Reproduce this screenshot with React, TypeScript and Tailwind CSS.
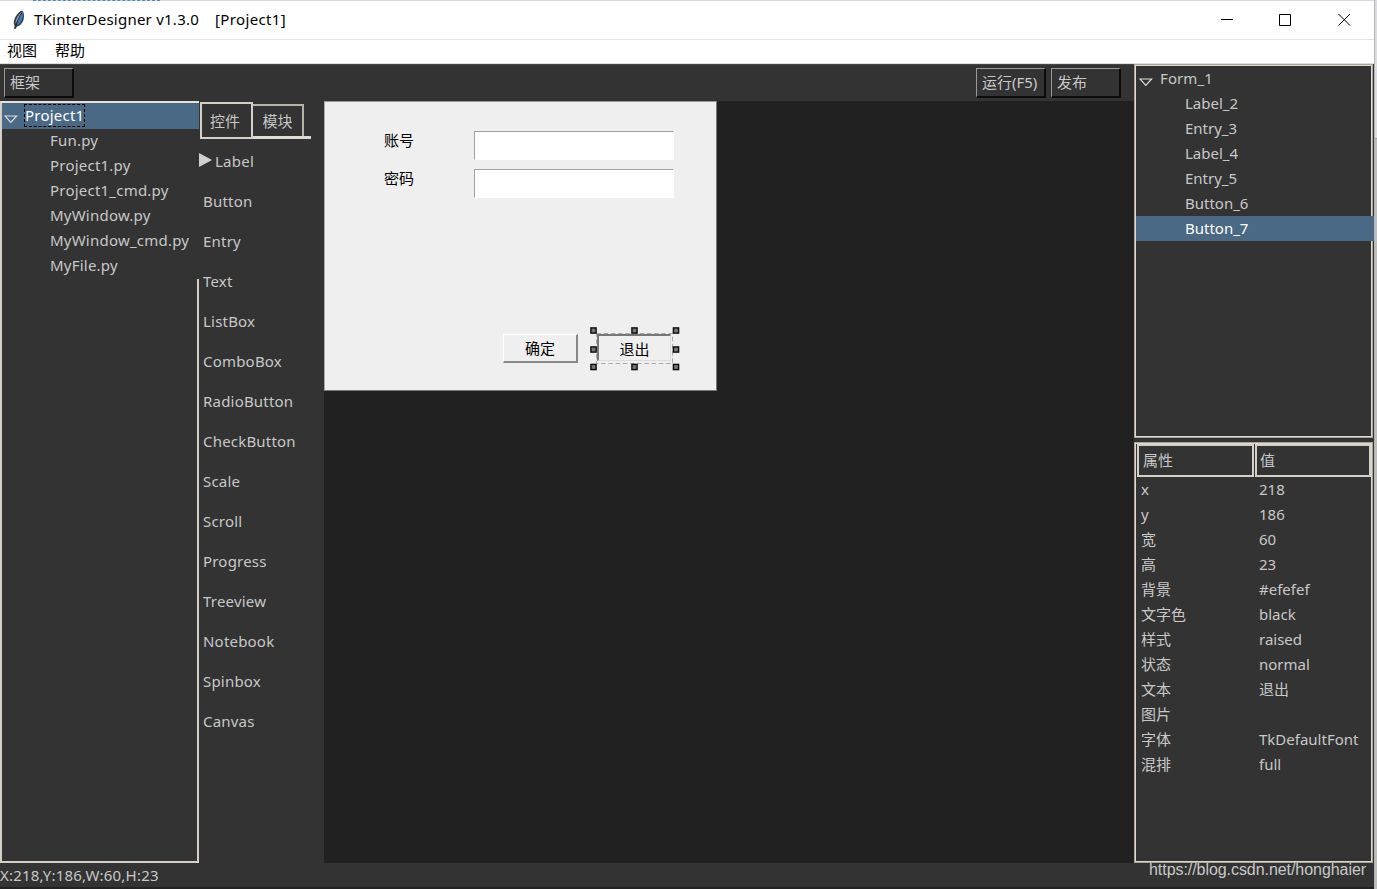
import React from "react";

const files = ["Fun.py", "Project1.py", "Project1_cmd.py", "MyWindow.py", "MyWindow_cmd.py", "MyFile.py"];
const widgets = ["Button", "Entry", "Text", "ListBox", "ComboBox", "RadioButton", "CheckButton", "Scale", "Scroll", "Progress", "Treeview", "Notebook", "Spinbox", "Canvas"];
const nodes = ["Label_2", "Entry_3", "Label_4", "Entry_5", "Button_6", "Button_7"];
const props: [string, string][] = [
  ["x", "218"], ["y", "186"], ["宽", "60"], ["高", "23"], ["背景", "#efefef"], ["文字色", "black"],
  ["样式", "raised"], ["状态", "normal"], ["文本", "退出"], ["图片", ""], ["字体", "TkDefaultFont"], ["混排", "full"],
];
const handles = [
  [3.5, 3.5], [44.5, 3.5], [86, 3.5], [3.5, 22.5], [86, 22.5], [3.5, 40], [44.5, 40], [86, 40],
];

function Feather() {
  return (
    <svg width="12" height="20" viewBox="0 0 12 20" className="ml-[13px] shrink-0">
      <path d="M9 0.5 C11 2 11.5 6 10.5 10 C9.5 13 7 16 4 16.5 L2.6 19 L1 18.6 L1.6 15.5 C0 13 1 9.5 3 6 C4.5 3.5 7 1 9 0.5 Z" fill="#363c42" />
      <path d="M9.2 1.5 C10.5 4 10 9 7.4 13 L4 15.2 C4.6 10 6 6 9.2 1.5 Z" fill="#3f79b5" />
      <path d="M8.3 2.4 C4.6 5.6 2.3 10 2.5 14 L4.6 10.4 Z" fill="#93a9b8" />
      <path d="M8.8 3 C6.2 7 4.2 11 2.4 16.6" fill="none" stroke="#1b242c" strokeWidth="0.8" />
    </svg>
  );
}

function Expander({ className }: { className: string }) {
  return (
    <svg width="14" height="9" viewBox="0 0 14 9" className={className} fill="none" stroke="#dedede" strokeWidth="1.2">
      <path d="M1 1 H12.6 L6.8 7.4 Z" />
    </svg>
  );
}

function ToolButton({ label }: { label: string }) {
  return (
    <div className="flex h-[30px] w-[70px] items-center border-t border-r-2 border-b-2 border-l border-t-[#999] border-r-[#0c0c0c] border-b-[#0c0c0c] border-l-[#999] pl-[5px] whitespace-nowrap">
      {label}
    </div>
  );
}

function Selection() {
  return (
    <svg width="90" height="44" viewBox="0 0 90 44" className="absolute top-[327px] left-[590px]">
      <rect x="6.5" y="6.5" width="76" height="30" fill="none" stroke="#aaa" strokeDasharray="4.5 2.7" />
      {handles.map(([x, y]) => (
        <rect key={`${x}-${y}`} x={x - 2.6} y={y - 2.6} width="5.2" height="5.2" fill="#777" stroke="#0a0a0a" strokeWidth="1.4" />
      ))}
    </svg>
  );
}

export default function App() {
  return (
    <div className="relative flex h-[889px] w-[1377px] overflow-hidden bg-[#333] font-['Noto_Sans','Noto_Sans_CJK_SC',sans-serif] text-[15px] leading-[25px] text-[#c8c8c8]">
      <div className="flex w-[1374px] flex-col">
        <header className="flex h-[40px] items-center border-t border-b border-t-[#d8d8e0] border-b-[#e3e3e3] bg-white text-black">
          <Feather />
          <span className="mb-[2px] ml-[9px] tracking-[0.24px] whitespace-pre">TKinterDesigner v1.3.0</span>
          <span className="mb-[2px] ml-[16px] tracking-[0.36px]">[Project1]</span>
          <svg width="134" height="14" viewBox="0 0 134 14" className="mr-[22px] ml-auto" fill="none" stroke="black" strokeWidth="1">
            <path d="M3 6.5 H15 M61.5 1.5 H72.5 V12.5 H61.5 Z M120.5 1 L132 12.5 M132 1 L120.5 12.5" />
          </svg>
        </header>
        <nav className="flex h-[24px] items-center gap-[18px] border-b border-[#ddd] bg-white pb-[2px] pl-[7px] text-black">
          <span>视图</span>
          <span>帮助</span>
        </nav>
        <div className="flex h-[799px]">
          <div className="flex w-[1134px] flex-col">
            <div className="flex h-[37px] items-center border-t border-[#444] pl-[4px]">
              <ToolButton label="框架" />
              <div className="ml-auto flex gap-[5px] pr-[13px]">
                <ToolButton label="运行(F5)" />
                <ToolButton label="发布" />
              </div>
            </div>
            <div className="flex h-[762px]">
              <aside className="flex w-[199px] flex-col tracking-[0.22px]">
                <div className="h-[178px] border-t-2 border-l-2 border-t-[#e4e1d8] border-l-[#d4d0c8]">
                  <div className="flex h-[26px] bg-[#4a6984] text-white">
                    <Expander className="mt-[12px] ml-[2px]" />
                    <span className="mt-px ml-[6px] h-[23px] w-[61px] border border-dashed border-black leading-[21px]">Project1</span>
                  </div>
                  {files.map((f) => <div key={f} className="h-[25px] pl-[48px] leading-[23px]">{f}</div>)}
                </div>
                <div className="flex-1 border-r-2 border-b-2 border-l-2 border-[#d4d0c8]" />
              </aside>
              <section className="w-[125px]">
                <div className="flex h-[38px] items-end pl-[1px]">
                  <div className="flex h-[37px] w-[53px] items-center justify-center border-2 border-[#d4d0c8] pt-px pr-[3px]">控件</div>
                  <div className="flex h-[35px] w-[58px] border-b-3 border-[#dedbd2]">
                    <div className="flex w-[51px] items-center justify-center border-t-2 border-r-2 border-[#b8b3aa]">模块</div>
                  </div>
                </div>
                <div className="mt-[2px] flex h-[40px] items-center leading-[40px]">
                  <svg width="14" height="16" viewBox="0 0 14 16" className="mb-[3px]"><path d="M0 1 L13 8 L0 15 Z" fill="#d0d0d0" /></svg>
                  <span className="ml-[2px] tracking-[0.25px]">Label</span>
                </div>
                {widgets.map((w) => <div key={w} className="h-[40px] pl-[4px] leading-[40px] tracking-[0.2px]">{w}</div>)}
              </section>
              <main className="w-[810px] bg-[#212121]">
                <div className="h-[290px] w-[393px] border border-t-[#999] border-r-[#777] border-b-[#777] border-l-[#aaa] bg-[#efefef] text-black">
                  <div className="flex pt-[29px] pl-[59px]">
                    <div className="w-[90px] leading-[19px]">账号</div>
                    <div className="h-[29px] w-[200px] border border-t-[#a0a0a0] border-r-white border-b-white border-l-[#a0a0a0] bg-white" />
                  </div>
                  <div className="flex pt-[9px] pl-[59px]">
                    <div className="w-[90px] leading-[18px]">密码</div>
                    <div className="h-[29px] w-[200px] border border-t-[#a0a0a0] border-r-white border-b-white border-l-[#a0a0a0] bg-white" />
                  </div>
                  <div className="mt-[136px] ml-[178px] flex gap-[19px]">
                    <div className="flex h-[29px] w-[75px] items-center justify-center border-t border-r-2 border-b-2 border-l border-t-white border-r-[#888] border-b-[#888] border-l-white pt-px">确定</div>
                    <div className="flex h-[27px] w-[74px] items-center justify-center border-t-2 border-r border-b border-l-2 border-t-[#777] border-r-[#ddd] border-b-[#ddd] border-l-[#777] pt-[3px]">退出</div>
                  </div>
                </div>
              </main>
            </div>
          </div>
          <aside className="flex w-[240px] flex-col pr-px">
            <div className="h-[374px] border border-[#aaa598] p-px pl-[2px] shadow-[inset_0_0_0_1px_#dedacf]">
              <div className="flex h-[25px]"><Expander className="mt-[12px] ml-[2px]" /><span className="ml-[7px] tracking-[0.1px]">Form_1</span></div>
              {nodes.map((n) => (
                <div key={n} className={n === "Button_7" ? "mr-[-3px] ml-[-1px] h-[25px] bg-[#4a6984] pl-[49px] text-white" : "h-[25px] pl-[48px]"}>{n}</div>
              ))}
            </div>
            <div className="mt-[4px] h-[421px] border border-[#aaa598] p-px pl-[2px] shadow-[inset_0_0_0_1px_#dedacf]">
              <div className="flex h-[33px] gap-px">
                <div className="w-[117px] border-2 border-[#d4d0c8] pl-[4px] leading-[29px]">属性</div>
                <div className="w-[116px] border-2 border-[#d4d0c8] pl-[3px] leading-[29px]">值</div>
              </div>
              {props.map(([k, v]) => (
                <div key={k} className="flex h-[25px] pl-[4px]"><span className="w-[118px]">{k}</span><span>{v}</span></div>
              ))}
            </div>
          </aside>
        </div>
        <footer className="flex h-[26px] border-b-2 border-[#222] tracking-[0.2px]">
          <span>X:218,Y:186,W:60,H:23</span>
        </footer>
      </div>
      <div className="flex w-[3px] flex-col border-l border-[#b5b5b5] bg-[#bdbdbd]">
        <div className="h-[139px] border-b border-[#999] bg-[#dcdce2]" />
      </div>
      <div className="absolute top-0 left-[33px] h-px w-[127px] border-t border-dashed border-[#4a86d8]" />
      <div className="absolute top-[860px] right-[11px] font-['Liberation_Sans',sans-serif] text-[16px] leading-[20px] tracking-[-0.06px] text-[#c8c8c8]">https://blog.csdn.net/honghaier</div>
      <Selection />
    </div>
  );
}
